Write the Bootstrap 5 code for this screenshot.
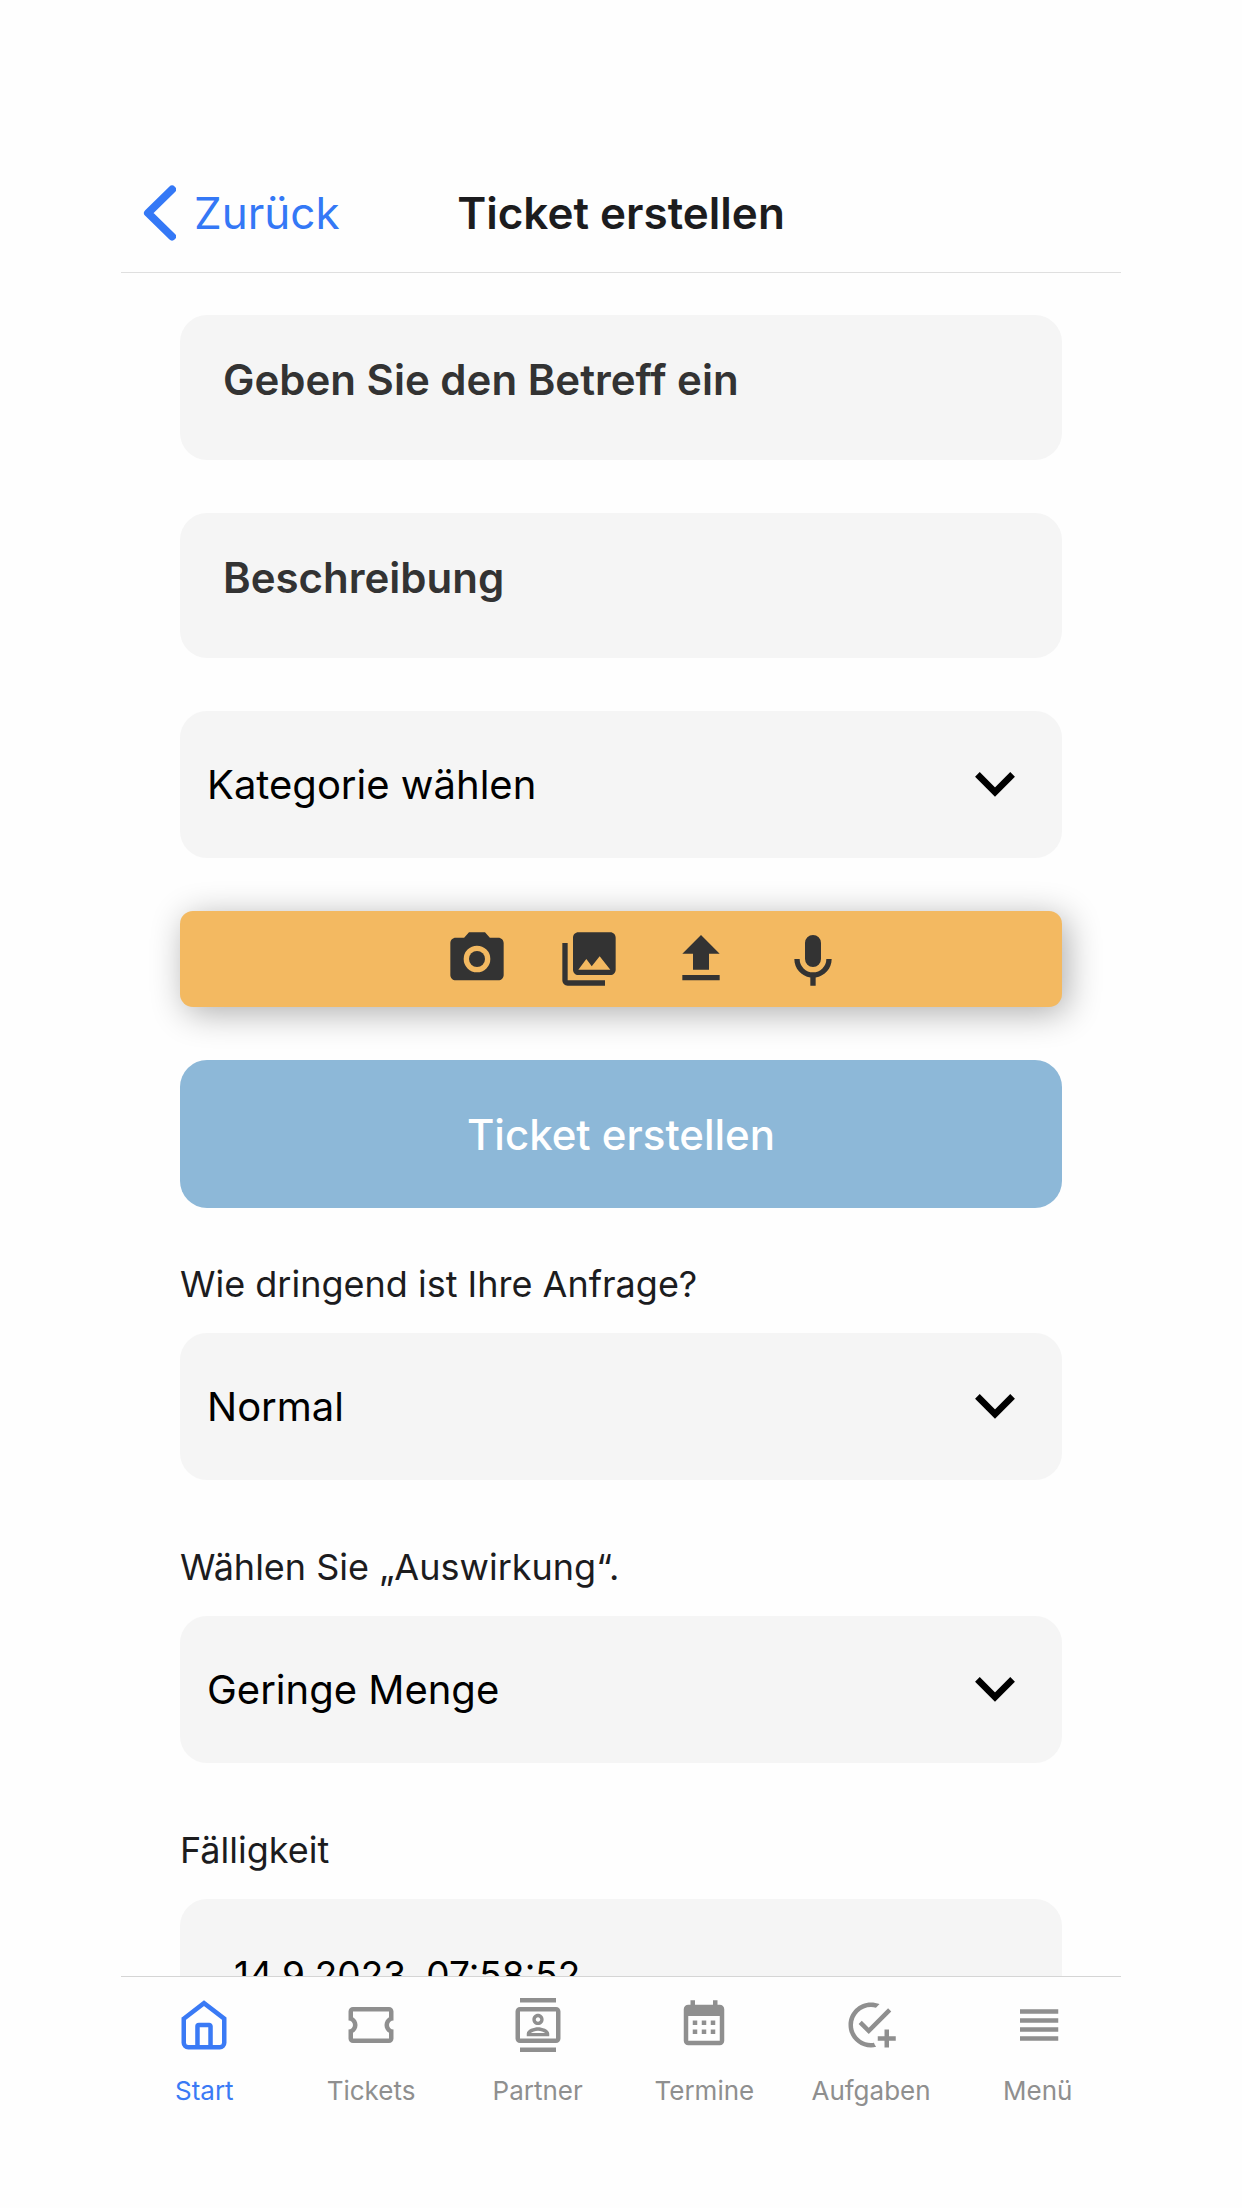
<!DOCTYPE html>
<html lang="de">
<head>
<meta charset="utf-8">
<meta name="viewport" content="width=device-width, initial-scale=1">
<title>Ticket erstellen</title>
<link href="https://cdn.jsdelivr.net/npm/bootstrap@5.3.0/dist/css/bootstrap.min.css" rel="stylesheet">
<style>
  body { font-family: Inter, "Liberation Sans", sans-serif; background: #fefefe; color: #1c1c1e; }
  .app-shell { max-width: 1000px; padding-top: 156px; }
  .app-header { display: grid; grid-template-columns: 1fr auto 1fr; height: 117px; border-bottom: 1px solid #dfdfdf; padding-bottom: 2px; flex: none; }
  .app-header h1 { font-size: 44px; line-height: 56px; font-weight: 600; }
  .back-link { color: #3478f6; font-size: 44px; line-height: 56px; gap: 18px; padding-left: 21px; }
  .app-main { padding: 42px 59px 0; min-height: 0; }
  .ticket-form { gap: 53px; }
  .question-list { gap: 64px; }
  .form-control.field, .form-select.field {
    background-color: #f5f5f5; border: 0; border-radius: 27px; color: #000;
    font-size: 40px; line-height: 56px; height: 147px; padding: 0 27px;
  }
  .form-select.field {
    padding-right: 110px;
    background-image: url("data:image/svg+xml,%3csvg xmlns='http://www.w3.org/2000/svg' viewBox='0 0 40 25'%3e%3cpath d='M2.4 2.4 20 20 37.6 2.4' fill='none' stroke='%23000' stroke-width='6.6'/%3e%3c/svg%3e");
    background-size: 40px 25px; background-position: right 47px center;
  }
  .form-control.field-text { height: 145px; padding: 0 43px 16px; font-size: 42px; font-weight: 600; }
  .field-text::placeholder { color: #333; opacity: 1; }
  .form-control.field-date { padding: 4px 54px 0; font-size: 37px; }
  .form-label.field-label { font-size: 36px; line-height: 47px; margin-bottom: 25px; }
  .attach-bar { height: 96px; gap: 48px; padding-left: 48px; background: #f3b961; border-radius: 13px; box-shadow: 5px 6px 34px rgba(0,0,0,.32); }
  .attach-bar .btn { color: #333; }
  .attach-bar svg { width: 64px; height: 64px; display: block; }
  .btn.submit-btn, .btn.submit-btn:disabled { height: 148px; background: #8db8d8; color: #fff; opacity: 1; border-radius: 27px; font-size: 42px; font-weight: 500; }
  .tab-bar { border-top: 1px solid #d5d5d5; height: 232px; padding-top: 21px; flex: none; }
  .tab-bar .nav-link { color: #8f8f8f; padding: 0; gap: 21px; font-size: 26px; line-height: 36px; }
  .tab-bar .nav-link.active { color: #3a7af5; }
  .tab-bar svg { width: 54px; height: 54px; }
</style>
</head>
<body>
<div class="app-shell container-fluid px-0 vh-100 d-flex flex-column">
  <header class="app-header align-items-center">
    <a href="#" class="back-link d-flex align-items-center text-decoration-none">
      <svg width="34" height="56" viewBox="0 0 34 56" fill="none" stroke="currentColor" stroke-width="8" stroke-linecap="round" stroke-linejoin="round" aria-hidden="true"><path d="M30 4.500 6 28l24 23.500"/></svg>
      Zurück
    </a>
    <h1 class="m-0">Ticket erstellen</h1>
  </header>

  <main class="app-main flex-grow-1 overflow-hidden">
    <form class="ticket-form d-flex flex-column">
      <input type="text" class="form-control field field-text" placeholder="Geben Sie den Betreff ein" aria-label="Betreff">
      <input type="text" class="form-control field field-text" placeholder="Beschreibung" aria-label="Beschreibung">
      <select class="form-select field" aria-label="Kategorie"><option>Kategorie wählen</option></select>

      <div class="attach-bar d-flex justify-content-center align-items-center">
        <button type="button" class="btn p-0 border-0" aria-label="Foto aufnehmen">
          <svg viewBox="0 0 24 24" fill="currentColor"><path fill-rule="evenodd" d="M9 2 7.17 4H4c-1.1 0-2 .9-2 2v12c0 1.1.9 2 2 2h16c1.1 0 2-.9 2-2V6c0-1.1-.9-2-2-2h-3.17L15 2zM12 17a5 5 0 1 1 0-10 5 5 0 0 1 0 10z"/><circle cx="12" cy="12" r="3"/></svg>
        </button>
        <button type="button" class="btn p-0 border-0" aria-label="Galerie">
          <svg viewBox="0 0 24 24" fill="currentColor"><path d="M22 16V4c0-1.1-.9-2-2-2H8c-1.1 0-2 .9-2 2v12c0 1.1.9 2 2 2h12c1.1 0 2-.9 2-2zm-11-4 2.03 2.71L16 11l4 5H8l3-4zM2 6v14c0 1.1.9 2 2 2h14v-2H4V6H2z"/></svg>
        </button>
        <button type="button" class="btn p-0 border-0" aria-label="Hochladen">
          <svg viewBox="0 0 24 24" fill="currentColor"><path d="M9 16v-6H5l7-7 7 7h-4v6H9zm-4 4v-2h14v2H5z"/></svg>
        </button>
        <button type="button" class="btn p-0 border-0" aria-label="Sprachaufnahme">
          <svg viewBox="0 -1 24 24" fill="currentColor"><path d="M12 2a3 3 0 0 1 3 3v6a3 3 0 0 1-6 0V5a3 3 0 0 1 3-3m7 9c0 3.53-2.61 6.44-6 6.93V21h-2v-3.07c-3.39-.49-6-3.4-6-6.93h2a5 5 0 0 0 10 0h2z"/></svg>
        </button>
      </div>

      <button type="submit" class="btn submit-btn w-100 border-0" disabled>Ticket erstellen</button>

      <div class="question-list d-flex flex-column">
        <div>
          <label class="form-label field-label d-block" for="urgency">Wie dringend ist Ihre Anfrage?</label>
          <select id="urgency" class="form-select field"><option>Normal</option></select>
        </div>
        <div>
          <label class="form-label field-label d-block" for="impact">Wählen Sie „Auswirkung“.</label>
          <select id="impact" class="form-select field"><option>Geringe Menge</option></select>
        </div>
        <div>
          <label class="form-label field-label d-block" for="due">Fälligkeit</label>
          <input id="due" type="text" class="form-control field field-date" value="14.9.2023, 07:58:52">
        </div>
      </div>
    </form>
  </main>

  <nav class="tab-bar nav nav-fill flex-nowrap align-items-start" aria-label="Hauptnavigation">
    <a href="#" class="nav-link active w-100 d-flex flex-column align-items-center">
      <svg viewBox="0 0 24 24" fill="none" stroke="currentColor" stroke-width="2"><path d="M3 9.200 12 2.300l9 6.900v10.700a2 2 0 0 1-2 2H5a2 2 0 0 1-2-2z"/><path d="M9.100 21.900V12.600a.6.6 0 0 1 .6-.6h4.600a.6.6 0 0 1 .6.6v9.300"/></svg>
      Start
    </a>
    <a href="#" class="nav-link w-100 d-flex flex-column align-items-center">
      <svg viewBox="0 0 24 24" fill="currentColor"><path d="M22 10V6c0-1.110-.9-2-2-2H4c-1.100 0-1.990.89-1.990 2v4c1.100 0 1.990.9 1.990 2s-.89 2-2 2v4c0 1.100.9 2 2 2h16c1.100 0 2-.9 2-2v-4c-1.100 0-2-.9-2-2s.9-2 2-2zm-2-1.460c-1.190.69-2 1.990-2 3.460s.81 2.770 2 3.460V18H4v-2.540c1.190-.69 2-1.990 2-3.460 0-1.480-.8-2.770-1.990-3.460L4 6h16v2.540z"/></svg>
      Tickets
    </a>
    <a href="#" class="nav-link w-100 d-flex flex-column align-items-center">
      <svg viewBox="0 0 24 24" fill="currentColor"><path d="M20 4H4c-1.100 0-2 .9-2 2v12c0 1.100.9 2 2 2h16c1.100 0 2-.9 2-2V6c0-1.100-.9-2-2-2zm0 14H4V6h16v12zM4 0h16v2H4zm0 22h16v2H4zm8-10c1.380 0 2.500-1.120 2.500-2.500S13.380 7 12 7 9.500 8.120 9.500 9.500 10.620 12 12 12zm0-3.500c.55 0 1 .45 1 1s-.45 1-1 1-1-.45-1-1 .45-1 1-1zm5 7.500c0-2.100-3.310-3-5-3s-5 .9-5 3v1h10v-1zm-8.190-.5c.61-.52 2.030-1 3.190-1 1.170 0 2.590.48 3.200 1H8.810z"/></svg>
      Partner
    </a>
    <a href="#" class="nav-link w-100 d-flex flex-column align-items-center">
      <svg viewBox="0 0 24 24" fill="currentColor"><path d="M9 10v2H7v-2h2m4 0v2h-2v-2h2m4 0v2h-2v-2h2m2-7a2 2 0 0 1 2 2v14a2 2 0 0 1-2 2H5a2 2 0 0 1-2-2V5a2 2 0 0 1 2-2h1V1h2v2h8V1h2v2h1m0 16V8H5v11h14M9 14v2H7v-2h2m4 0v2h-2v-2h2m4 0v2h-2v-2h2z"/></svg>
      Termine
    </a>
    <a href="#" class="nav-link w-100 d-flex flex-column align-items-center">
      <svg viewBox="0 0 24 24" fill="currentColor"><path d="M14.300 21.700C13.600 21.900 12.800 22 12 22 6.500 22 2 17.500 2 12S6.500 2 12 2c1.300 0 2.600.3 3.800.7l-1.600 1.600C13.500 4.100 12.800 4 12 4c-4.400 0-8 3.600-8 8s3.600 8 8 8c.4 0 .9 0 1.300-.1.200.7.6 1.300 1 1.800M7.900 10.100 6.500 11.500 11 16 21 6l-1.400-1.400L11 13.200 7.900 10.100M18 14v3h-3v2h3v3h2v-3h3v-2h-3v-3h-2z"/></svg>
      Aufgaben
    </a>
    <a href="#" class="nav-link w-100 d-flex flex-column align-items-center">
      <svg viewBox="0 0 24 24" fill="currentColor"><path d="M4 5v2h17V5H4m0 6h17V9H4v2m0 8h17v-2H4v2m0-4h17v-2H4v2z"/></svg>
      Menü
    </a>
  </nav>
</div>
<script src="https://cdn.jsdelivr.net/npm/bootstrap@5.3.0/dist/js/bootstrap.bundle.min.js"></script>
</body>
</html>
